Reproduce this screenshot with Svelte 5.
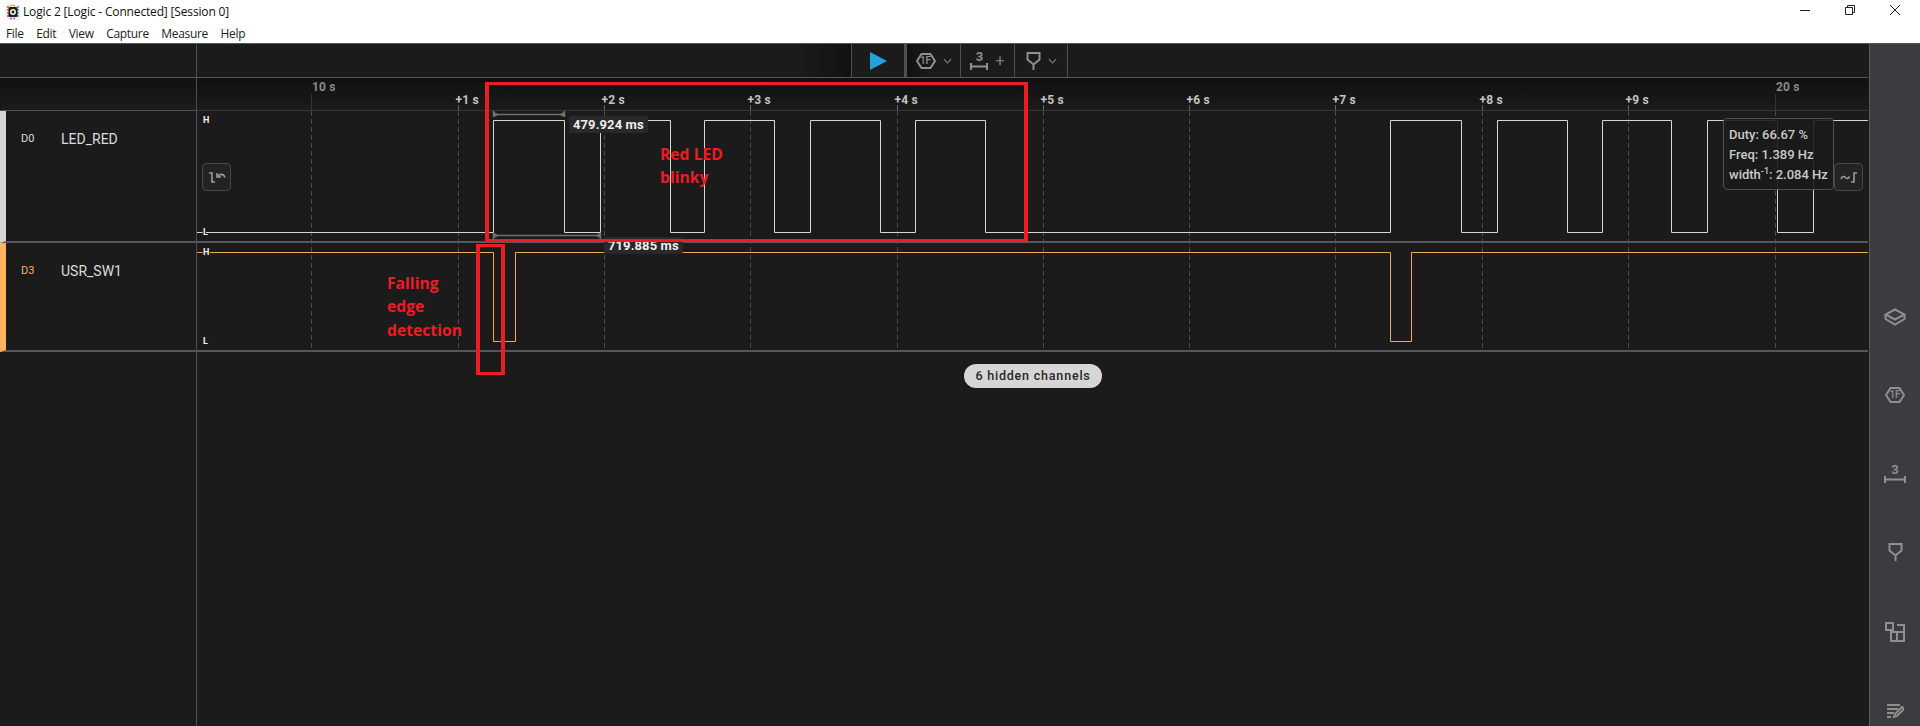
<script>
  const menus = ['File', 'Edit', 'View', 'Capture', 'Measure', 'Help'];
  const X0 = 197; // x origin of the plot
  const W = 1671;
  const sx = (x) => Math.floor(x - X0) + 0.5;
  const ticks = [
    { x: 311, label: '10 s', major: true },
    { x: 458, label: '+1 s' }, { x: 604, label: '+2 s' }, { x: 750.5, label: '+3 s' },
    { x: 897, label: '+4 s' }, { x: 1043, label: '+5 s' }, { x: 1189.5, label: '+6 s' },
    { x: 1335.5, label: '+7 s' }, { x: 1482, label: '+8 s' }, { x: 1628.5, label: '+9 s' },
    { x: 1775, label: '20 s', major: true }
  ];
  const edges = [493, 564.5, 600, 670, 704.5, 774.5, 810, 880, 915, 985.5, 1390, 1461.5, 1497, 1567, 1602.5, 1671.5, 1707, 1777, 1813];
  function wave(list, low, high, startLow) {
    let level = startLow;
    let d = `M0 ${level ? low : high}`;
    for (const e of list) {
      const x = sx(e);
      d += ` H${x} V${level ? high : low}`;
      level = !level;
    }
    return d + ` H${W}`;
  }
  const red = wave(edges, 232.5, 120.5, true);
  const orange = wave([493.5, 515.5, 1390, 1411.5], 341.5, 252.5, false);
  const dividers = [242, 351];
</script>

<div class="window">
  <header class="titlebar">
    <svg class="logo" viewBox="0 0 18 18" aria-hidden="true">
      <rect x="1" y="1" width="16" height="16" rx="3" fill="#f4f2f4" />
      <path d="M4 3v12" stroke="#f0483c" stroke-width="1.6" stroke-dasharray="2 1" />
      <path d="M14 3v12" stroke="#3a9ee8" stroke-width="1.6" stroke-dasharray="2 1" />
      <path d="M6 2.500h6" stroke="#f0a020" stroke-width="1.6" stroke-dasharray="2 1" />
      <path d="M6 15.500h6" stroke="#a050d0" stroke-width="1.6" stroke-dasharray="2 1" />
      <rect x="4.500" y="4" width="9" height="10" rx="1.5" fill="#1c1c1c" />
      <circle cx="9" cy="9" r="2.2" fill="none" stroke="#f4f4f4" stroke-width="1.5" />
    </svg>
    <span class="title">Logic 2 [Logic - Connected] [Session 0]</span>
    <div class="winbtns">
      <svg viewBox="0 0 10 10"><path d="M0 5.500h10" /></svg>
      <svg viewBox="0 0 10 10"><path d="M.5 2.500h7v7h-7zM2.500 2.500v-2h7v7h-2" /></svg>
      <svg viewBox="0 0 10 10"><path d="M0 0l10 10M10 0L0 10" /></svg>
    </div>
  </header>

  <nav class="menubar">
    {#each menus as m}<span>{m}</span>{/each}
  </nav>

  <main class="app">
    <aside class="channels">
      <div class="toolbar-spacer"></div>
      <div class="time-spacer"></div>
      <div class="chan chan-d0">
        <span class="idx">D0</span><span class="name">LED_RED</span>
      </div>
      <div class="chan chan-d3">
        <span class="idx">D3</span><span class="name">USR_SW1</span>
      </div>
    </aside>

    <section class="plot">
      <div class="toolbar">
        <button class="tb play" aria-label="Start">
          <svg viewBox="0 0 17 18" width="17" height="18"><path d="M0 0L17 9 0 18z" fill="#22a1dd" /></svg>
        </button>
        <button class="tb t1" aria-label="Analyzers">
          <span class="hex"><svg viewBox="0 0 20 16" width="20" height="16"><path class="ic" d="M5.500 1h9L19 8l-4.500 7h-9L1 8z" /></svg><b>1F</b></span>
          <svg class="chev" viewBox="0 0 10 6" width="9" height="6"><path d="M1 1l4 4 4-4" /></svg>
        </button>
        <button class="tb t2" aria-label="Measurements">
          <span class="meas-ic"><b>3</b><svg viewBox="0 0 18 7" width="18" height="7"><path class="ic" d="M1 0v7M17 0v7M1 3.500h16" /></svg></span>
          <span class="plus">+</span>
        </button>
        <button class="tb t3" aria-label="Markers">
          <svg viewBox="0 0 15 18" width="15" height="18"><path class="ic" d="M1.500 1h12v6.500L7.500 12.500 1.500 7.500zM7.500 12.500V18" /></svg>
          <svg class="chev" viewBox="0 0 10 6" width="9" height="6"><path d="M1 1l4 4 4-4" /></svg>
        </button>
      </div>

      <div class="canvas">
        <svg class="scope" width={W} height="648" viewBox="0 78 {W} 648" aria-hidden="true">
          <defs>
            <linearGradient id="tg" x1="0" y1="0" x2="0" y2="1">
              <stop offset="0" stop-color="#101010" />
              <stop offset="1" stop-color="#1b1b1b" />
            </linearGradient>
          </defs>
          <rect x="0" y="78" width={W} height="32" fill="url(#tg)" />
          <path d="M0 110.500H{W}" class="tline" />
          {#each ticks as t}
            {#if t.major}
              <path d={`M${sx(t.x)} 94V110`} class="tmaj" />
              <text x={sx(t.x) + 0.5} y="91" class="lab maj">{t.label}</text>
            {:else}
              <path d={`M${sx(t.x)} 105V110`} class="tmin" />
              <text x={sx(t.x) - 3} y="104" class="lab">{t.label}</text>
            {/if}
            <path d={`M${sx(t.x)} 111V350`} class="tdash" />
          {/each}
          <path d={red} class="sig white" />
          <path d={orange} class="sig amber" />
          {#each dividers as y}
            <path d={`M0 ${y}H${W}`} class="div" />
          {/each}
          <g class="hl">
            <text x="6" y="123">H</text><text x="6" y="235">L</text>
            <text x="6" y="255">H</text><text x="6" y="344">L</text>
          </g>
          <g class="meas">
            <path d="M296.500 111v6M367.500 111v6M296.500 114.500H367.500" />
            <path d="M297 112l5 2.500-5 2.500zM367 112l-5 2.500 5 2.500z" class="fillm" />
            <path d="M296.500 233v6M403.500 233v6M296.500 235.500H403.500" />
            <path d="M297 233l5 2.500-5 2.500zM403 233l-5 2.500 5 2.500z" class="fillm" />
          </g>
        </svg>

        <div class="pill">6 hidden channels</div>
        <div class="mlabel m1">479.924 ms</div>
        <div class="mlabel m2">719.885 ms</div>
        <button class="trig tl" aria-label="Previous edge">
          <svg viewBox="0 0 18 12" width="18" height="12"><path d="M1 2h3v9h3" /><path d="M9 2v4h4M9.500 5.500c2-3 6-3 7.500 1" /></svg>
        </button>
        <button class="trig tr" aria-label="Next edge">
          <svg viewBox="0 0 18 12" width="18" height="12"><path d="M1 8c1-3 3-3 4.500-1.500S8 8 9.500 5.500M11 11h3V2h3" /></svg>
        </button>
        <div class="tip">
          <div>Duty: 66.67 %</div>
          <div>Freq: 1.389 Hz</div>
          <div>width<sup>-1</sup>: 2.084 Hz</div>
        </div>

        <div class="note n-box"></div>
        <div class="note n-edge"></div>
        <div class="note n-t1">Red LED<br />blinky</div>
        <div class="note n-t2">Falling<br />edge<br />detection</div>
      </div>
    </section>

    <aside class="sidebar">
      <svg viewBox="0 0 22 18" width="22" height="18"><path class="ic" d="M11 1.500L20.500 6.500 11 11.500 1.500 6.500zM1.500 6.500v4.500L11 16.500l9.500-5.500V6.500" /></svg>
      <span class="hex"><svg viewBox="0 0 20 16" width="20" height="16"><path class="ic" d="M5.500 1h9L19 8l-4.500 7h-9L1 8z" /></svg><b>1F</b></span>
      <span class="meas-ic"><b>3</b><svg viewBox="0 0 22 7" width="22" height="7"><path class="ic" d="M1 0v7M21 0v7M1 3.500h20" /></svg></span>
      <svg viewBox="0 0 15 18" width="15" height="18"><path class="ic" d="M1.500 1h12v6.500L7.500 12.500 1.500 7.500zM7.500 12.500V18" /></svg>
      <svg viewBox="0 0 20 20" width="20" height="20"><path class="ic" d="M1 1h7v7H1zM6 10h13v9H6zM12 3h7v16M12 10v9" /></svg>
      <svg viewBox="0 0 18 16" width="18" height="16"><path class="ic" d="M1 2h13M1 6h11M1 10h7M1 14h4M8 14l1-3 7-7 2 2-7 7z" /></svg>
    </aside>
  </main>
</div>

<style>
  :global(body) { margin: 0; background: #1b1b1b; }
  .window {
    width: 1920px;
    height: 726px;
    display: flex;
    flex-direction: column;
    overflow: hidden;
    font-family: Roboto, "Liberation Sans", sans-serif;
    background: #fff;
  }
  .titlebar {
    height: 23px;
    flex: none;
    display: flex;
    align-items: center;
    padding: 0 20px 0 4px;
    font: 12px "Open Sans", "Liberation Sans", sans-serif;
    color: #111;
  }
  .logo { width: 18px; height: 18px; margin-right: 1px; }
  .title { letter-spacing: -0.16px; }
  .winbtns { margin-left: auto; display: flex; gap: 35px; margin-top: -4px; }
  .winbtns svg { width: 10px; height: 10px; overflow: visible; fill: none; stroke: #222; stroke-width: 1; }
  .menubar {
    height: 20px;
    flex: none;
    display: flex;
    align-items: center;
    gap: 12.500px;
    padding-left: 6px;
    font: 12px "Open Sans", "Liberation Sans", sans-serif;
    letter-spacing: -0.32px;
    color: #222;
  }
  .app {
    flex: 1;
    min-height: 0;
    display: flex;
    background: #1b1b1b;
    border-top: 1px solid #57575b;
  }
  .channels {
    width: 196px;
    flex: none;
    border-right: 1px solid #4d4d52;
    display: flex;
    flex-direction: column;
  }
  .toolbar-spacer { height: 33px; border-bottom: 1px solid #57575b; }
  .time-spacer { height: 32px; border-bottom: 1px solid #4d4d52; background: linear-gradient(#111, #1b1b1b); }
  .chan {
    display: flex;
    align-items: flex-start;
    border-left: 6px solid;
    border-bottom: 2px solid #57575b;
    color: #dcdcdc;
    box-sizing: border-box;
  }
  .chan-d0 { height: 132px; border-left-color: #d6d6d6; }
  .chan-d3 { height: 109px; border-left-color: #ffb35c; }
  .idx { width: 55px; padding-left: 15px; box-sizing: border-box; font-size: 11px; line-height: 56px; }
  .name { font-size: 14px; line-height: 56px; }
  .chan-d3 .idx { color: #ffb35c; }

  .plot { flex: 1; min-width: 0; display: flex; flex-direction: column; }
  .toolbar {
    height: 33px;
    flex: none;
    display: flex;
    padding-left: 654px;
    border-bottom: 1px solid #57575b;
    background: linear-gradient(90deg, #1b1b1b 600px, #111 654px, #1b1b1b 655px);
  }
  .tb {
    all: unset;
    display: flex;
    align-items: center;
    justify-content: center;
    gap: 7px;
    box-sizing: border-box;
    height: 33px;
    border-left: 1px solid #4d4d52;
  }
  .play { width: 53px; }
  .t1 { width: 56px; border-left: 3px solid #4d4d52; background: linear-gradient(90deg, #101010, #1b1b1b 24px); }
  .t2 { width: 54px; }
  .t3 { width: 54px; border-right: 1px solid #4d4d52; }
  .ic { fill: none; stroke: #8f8f8f; stroke-width: 2; }
  .hex { position: relative; display: flex; align-items: center; justify-content: center; }
  .hex b { position: absolute; font: 500 10px/16px Roboto, sans-serif; color: #8f8f8f; }
  .meas-ic { display: flex; flex-direction: column; align-items: center; gap: 1px; }
  .meas-ic b { font: 700 13px/11px Roboto, sans-serif; color: #8f8f8f; }
  .chev { fill: none; stroke: #7d7d7d; stroke-width: 1.300; }
  .plus { color: #7d7d7d; font-size: 16px; line-height: 1; }

  .canvas { position: relative; flex: 1; min-height: 0; }
  .scope { position: absolute; inset: 0; display: block; }
  .tline { stroke: #35353a; stroke-width: 1; }
  .tmaj { stroke: #333; stroke-width: 1; }
  .tmin { stroke: #666; stroke-width: 1; }
  .tdash { stroke: #4c4c4c; stroke-width: 1; stroke-dasharray: 5 3; }
  .lab { font: 700 12px Roboto, sans-serif; fill: #c4c4c4; letter-spacing: 0.200px; }
  .lab.maj { fill: #8a8a8a; }
  .sig { fill: none; stroke-width: 1; }
  .white { stroke: #d6d6d6; }
  .amber { stroke: #f1a94f; }
  .div { stroke: #57575b; stroke-width: 2; }
  .hl text { font: 700 9px Roboto, sans-serif; fill: #eee; paint-order: stroke; stroke: #1b1b1b; stroke-width: 2px; }
  .meas path { fill: none; stroke: #707070; stroke-width: 1.500; }
  .meas .fillm { fill: #707070; stroke: none; }

  .mlabel {
    position: absolute;
    height: 17px;
    padding: 0 4px;
    background: #29292b;
    border-radius: 2px;
    color: #eee;
    font-weight: 700;
    font-size: 13px;
    line-height: 17px;
    letter-spacing: 0.100px;
    white-space: nowrap;
  }
  .m1 { left: 372px; top: 38px; }
  .m2 { left: 407px; top: 159px; }
  .pill {
    position: absolute;
    left: 767px;
    top: 286px;
    width: 138px;
    height: 24px;
    border-radius: 12px;
    background: #d6d6d6;
    color: #26262a;
    font-size: 12.500px;
    font-weight: 500;
    letter-spacing: 0.800px;
    line-height: 24px;
    text-align: center;
  }
  .trig {
    all: unset;
    position: absolute;
    top: 85px;
    box-sizing: border-box;
    width: 29px;
    height: 28px;
    display: flex;
    align-items: center;
    justify-content: center;
    background: #232325;
    border: 1px solid #48484c;
    border-radius: 4px;
  }
  .trig svg { fill: none; stroke: #9a9a9a; stroke-width: 1.600; }
  .tl { left: 5px; }
  .tr { left: 1637px; }
  .tip {
    position: absolute;
    left: 1526px;
    top: 40px;
    width: 111px;
    height: 72px;
    box-sizing: border-box;
    padding: 6px 0 0 5px;
    background: rgba(27, 27, 27, 0.9);
    border: 1px solid #4d4d52;
    border-radius: 4px;
    color: #c9c9c9;
    font-size: 13px;
    font-weight: 500;
    line-height: 20px;
    white-space: nowrap;
  }
  .tip sup { font-size: 9px; line-height: 0; }

  .note { position: absolute; color: #ed1c24; box-sizing: border-box; }
  .n-box { left: 288px; top: 4px; width: 543px; height: 160px; border: solid #ed1c24; border-width: 3px 4px; }
  .n-edge { left: 279px; top: 166px; width: 29px; height: 131px; border: solid #ed1c24; border-width: 3px 4px; }
  .n-t1, .n-t2 { font: 700 15.700px/23.400px "Open Sans", sans-serif; }
  .n-t1 { left: 463px; top: 65px; }
  .n-t2 { left: 190px; top: 194px; }

  .sidebar {
    width: 51px;
    flex: none;
    border-left: 1px solid #5a5a5e;
    background: #3c3b40;
    box-sizing: border-box;
    display: flex;
    flex-direction: column;
    align-items: center;
    justify-content: space-between;
    padding: 264px 0 7px;
    margin-left: 1px;
  }
</style>
